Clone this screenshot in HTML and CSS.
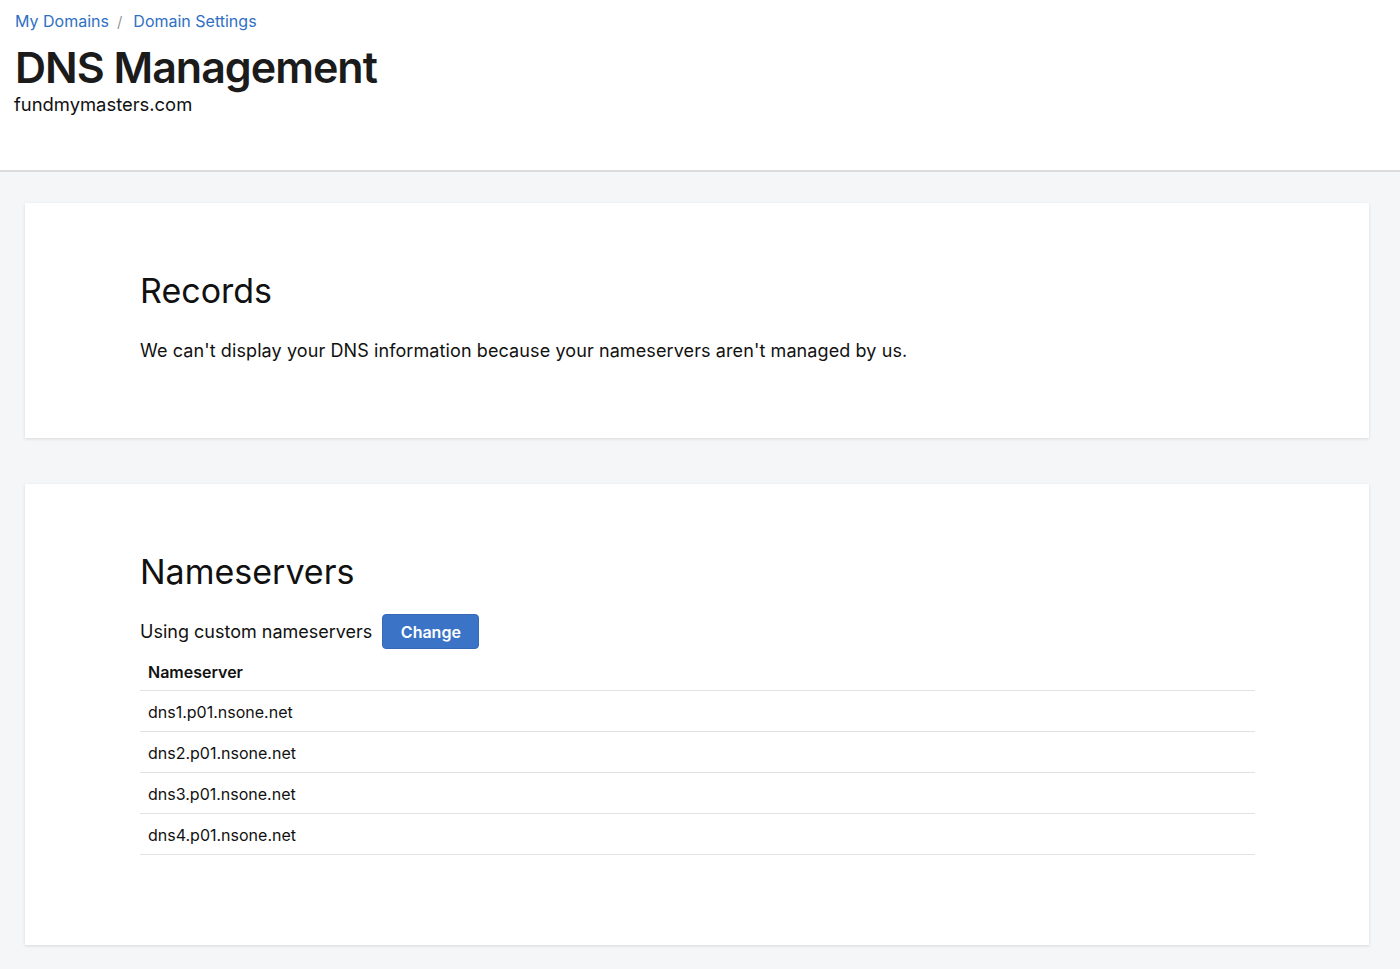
FILE: index.html
```html
<!DOCTYPE html>
<html lang="en">
<head>
<meta charset="utf-8">
<title>DNS Management</title>
<link rel="stylesheet" href="styles.css">
</head>
<body>
<header class="page-header">
  <nav class="breadcrumb">
    <a href="#" class="crumb">My Domains</a>
    <span class="sep">/</span>
    <a href="#" class="crumb">Domain Settings</a>
  </nav>
  <h1 class="title">DNS Management</h1>
  <div class="domain">fundmymasters.com</div>
</header>
<main class="content">
  <section class="card card-records">
    <h2 class="card-title">Records</h2>
    <p class="card-text">We can't display your DNS information because your nameservers aren't managed by us.</p>
  </section>
  <section class="card card-ns">
    <h2 class="card-title">Nameservers</h2>
    <div class="ns-status">
      <span class="ns-label">Using custom nameservers</span>
      <button class="btn-change" type="button">Change</button>
    </div>
    <table class="ns-table">
      <thead><tr><th>Nameserver</th></tr></thead>
      <tbody>
        <tr><td>dns1.p01.nsone.net</td></tr>
        <tr><td>dns2.p01.nsone.net</td></tr>
        <tr><td>dns3.p01.nsone.net</td></tr>
        <tr><td>dns4.p01.nsone.net</td></tr>
      </tbody>
    </table>
  </section>
</main>
</body>
</html>
```
FILE: styles.css
```css
* { box-sizing: border-box; }
html, body { margin: 0; padding: 0; }
body {
  font-family: "Inter", "Liberation Sans", sans-serif;
  color: #111;
  background: #f5f6f7;
}
.page-header {
  background: #fff;
  height: 172px;
  padding: 9px 14px 0 14px;
  border-bottom: 2px solid #dcdcdc;
}
.breadcrumb {
  display: flex;
  align-items: center;
  font-size: 16px;
  line-height: 22px;
}
.crumb { color: #2f6fc4; text-decoration: none; padding-left: 1px; }
.sep { color: #999; margin: 2px 10px 0 8px; font-size: 15px; }
.title {
  margin: 12px 0 0 1px;
  font-size: 43px;
  line-height: 44px;
  font-weight: 600;
  letter-spacing: -1px;
  color: #1b1b1b;
}
.domain {
  margin-top: 3px;
  font-size: 18.4px;
  line-height: 24px;
  color: #111;
}
.content {
  padding: 31px 31px 24px 25px;
  display: flex;
  flex-direction: column;
  gap: 46px;
}
.card {
  background: #fff;
  box-shadow: 0 1px 3px rgba(0,0,0,0.12);
  padding: 0 114px 0 115px;
}
.card-records { height: 235px; padding-top: 66px; }
.card-ns { height: 461px; padding-top: 66px; }
.card-title {
  margin: 0;
  font-size: 34px;
  line-height: 44px;
  font-weight: 400;
  color: #111;
}
.card-text {
  margin: 26px 0 0 0;
  font-size: 18px;
  line-height: 24px;
  letter-spacing: 0.1px;
}
.ns-status {
  display: flex;
  align-items: center;
  margin-top: 20px;
  gap: 10px;
}
.ns-label { font-size: 18px; line-height: 24px; }
.btn-change {
  font-family: inherit;
  background: #3b74c6;
  color: #fff;
  border: 1px solid #3569b5;
  border-radius: 4px;
  height: 35px;
  width: 97px;
  font-size: 16px;
  font-weight: 600;
  cursor: pointer;
}
.ns-table {
  width: 100%;
  border-collapse: collapse;
  margin-top: 7px;
}
.ns-table th, .ns-table td {
  text-align: left;
  padding: 0 8px;
  font-size: 16px;
  border-bottom: 1px solid #e2e2e2;
}
.ns-table th { font-weight: 600; height: 34px; padding-bottom: 2px; }
.ns-table td { height: 41px; padding-top: 3px; }
```
